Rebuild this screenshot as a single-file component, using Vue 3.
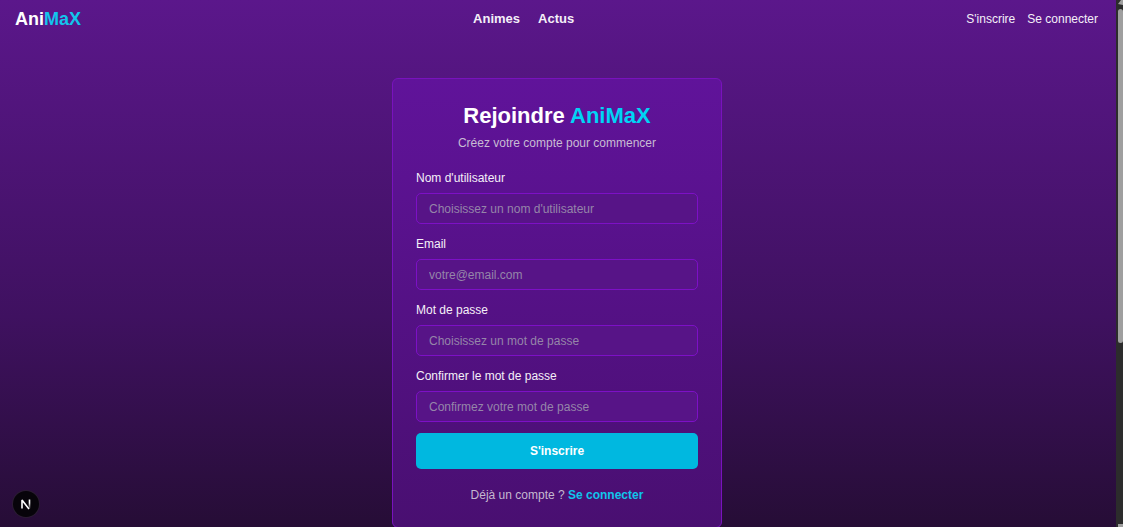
<template>
  <div class="layout">
    <div class="page">
      <header class="navbar">
        <a href="#" class="logo">Ani<span class="accent">MaX</span></a>
        <nav class="nav-links">
          <a href="#">Animes</a>
          <a href="#">Actus</a>
        </nav>
        <div class="auth-links">
          <a href="#">S'inscrire</a>
          <a href="#">Se connecter</a>
        </div>
      </header>

      <main class="content">
        <section class="card">
          <h1>Rejoindre <span class="accent">AniMaX</span></h1>
          <p class="subtitle">Créez votre compte pour commencer</p>

          <form @submit.prevent>
            <div v-for="field in fields" :key="field.id" class="form-group">
              <label :for="field.id">{{ field.label }}</label>
              <input
                :id="field.id"
                v-model="form[field.id]"
                :type="field.type"
                :placeholder="field.placeholder"
              />
            </div>
            <button type="submit" class="btn">S'inscrire</button>
          </form>

          <p class="login">Déjà un compte ? <a href="#">Se connecter</a></p>
        </section>
      </main>
    </div>

    <div class="scrollbar" aria-hidden="true">
      <div class="arrow arrow-up"></div>
      <div class="thumb"></div>
      <div class="arrow arrow-down"></div>
    </div>

    <button type="button" class="dev-badge" aria-label="Next.js">
      <svg viewBox="0 0 26 26" width="26" height="26" fill="none">
        <defs>
          <linearGradient id="fade" x1="0" y1="8" x2="0" y2="18" gradientUnits="userSpaceOnUse">
            <stop offset="0.4" stop-color="#fff" />
            <stop offset="1" stop-color="#fff" stop-opacity="0.1" />
          </linearGradient>
        </defs>
        <path d="M9 17.5V9L16 18" stroke="#fff" stroke-width="1.6" stroke-linejoin="bevel" />
        <path d="M16.5 8.5V17.5" stroke="url(#fade)" stroke-width="1.6" />
      </svg>
    </button>
  </div>
</template>

<script setup>
import { reactive } from 'vue';

const fields = [
  { id: 'username', label: "Nom d'utilisateur", type: 'text', placeholder: "Choisissez un nom d'utilisateur" },
  { id: 'email', label: 'Email', type: 'email', placeholder: 'votre@email.com' },
  { id: 'password', label: 'Mot de passe', type: 'password', placeholder: 'Choisissez un mot de passe' },
  { id: 'confirm', label: 'Confirmer le mot de passe', type: 'password', placeholder: 'Confirmez votre mot de passe' }
];

const form = reactive({
  username: '',
  email: '',
  password: '',
  confirm: ''
});
</script>

<style>
body {
  margin: 0;
  background: #260d36;
}
</style>

<style scoped>
.layout {
  display: flex;
  height: 100vh;
  overflow: hidden;
  font-family: "Liberation Sans", Arial, sans-serif;
  font-size: 12px;
  line-height: 18px;
  color: #f4eff8;
}

.page {
  flex: 1;
  min-width: 0;
  overflow: hidden;
  background: linear-gradient(#5b178b, #3f1160 60%, #260d36);
}

a {
  color: inherit;
  text-decoration: none;
}

.accent {
  color: #00d4f5;
}

.navbar {
  display: flex;
  align-items: center;
  justify-content: space-between;
  height: 38px;
  padding: 0 18px 0 15px;
}

.logo {
  font-size: 18px;
  font-weight: bold;
  color: #fff;
}

.logo .accent {
  color: #12c4ec;
}

.nav-links {
  display: flex;
  gap: 18px;
  font-size: 13px;
  font-weight: bold;
}

.auth-links {
  display: flex;
  gap: 12px;
}

.content {
  display: flex;
  justify-content: center;
  padding: 40px 16px 0 14px;
}

.card {
  box-sizing: border-box;
  width: 100%;
  max-width: 330px;
  padding: 23px;
  border: 1px solid #7912bd;
  border-radius: 6px;
  background: linear-gradient(#60139a, #490f71);
}

h1 {
  margin: 0 0 5px;
  font-size: 22px;
  line-height: 27px;
  text-align: center;
  color: #fff;
}

.subtitle {
  margin: 0 0 17px;
  text-align: center;
  color: #c8bcd3;
}

.form-group {
  display: flex;
  flex-direction: column;
  gap: 6px;
  margin-bottom: 11px;
}

.form-group input {
  box-sizing: border-box;
  width: 100%;
  height: 31px;
  padding: 0 12px;
  border: 1px solid #7d10c6;
  border-radius: 5px;
  background: #571487;
  color: #fff;
  font: inherit;
  outline: none;
}

.form-group input::placeholder {
  color: #9585a9;
  opacity: 1;
}

.btn {
  display: block;
  width: 100%;
  height: 36px;
  padding: 0;
  border: none;
  border-radius: 5px;
  background: #00b8e0;
  color: #fff;
  font: inherit;
  font-weight: bold;
  cursor: pointer;
}

.login {
  margin: 17px 0 0;
  text-align: center;
  color: #c5b8d0;
}

.login a {
  color: #10c5eb;
  font-weight: bold;
}

.scrollbar {
  display: flex;
  flex-direction: column;
  align-items: flex-end;
  width: 7px;
  background: #2c2c2c;
}

.thumb {
  width: 5px;
  height: 334px;
  margin: 4px 0 auto;
  border-radius: 3px;
  background: #9f9f9f;
}

.arrow {
  width: 5px;
  background: #9f9f9f;
}

.arrow-up {
  height: 5px;
  clip-path: polygon(60% 0, 100% 0, 100% 100%, 0 80%);
}

.arrow-down {
  height: 3px;
}

.dev-badge {
  position: fixed;
  left: 13px;
  bottom: 10px;
  width: 26px;
  height: 26px;
  padding: 0;
  border: none;
  border-radius: 50%;
  background: #07040a;
  box-shadow: 0 0 0 1px #2b1c33;
}

.dev-badge svg {
  display: block;
}
</style>
